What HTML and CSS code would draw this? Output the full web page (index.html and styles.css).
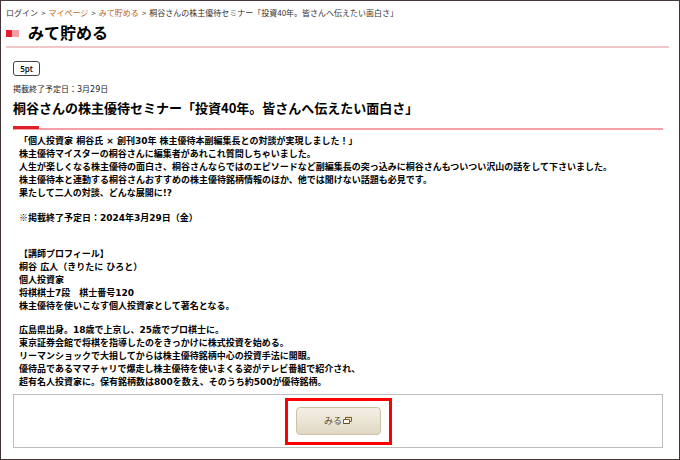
FILE: index.html
```html
<!DOCTYPE html>
<html lang="ja">
<head>
<meta charset="utf-8">
<meta name="viewport" content="width=device-width, initial-scale=1">
<title>みて貯める</title>
<link rel="stylesheet" href="styles.css">
</head>
<body>
<div class="page">
  <nav class="breadcrumb" aria-label="breadcrumb">
    <span>ログイン</span>
    <span>&gt;</span>
    <a href="#">マイページ</a>
    <span>&gt;</span>
    <a href="#">みて貯める</a>
    <span>&gt;</span>
    <span>桐谷さんの株主優待セミナー「投資40年。皆さんへ伝えたい面白さ」</span>
  </nav>
  <h1 class="page-title">みて貯める</h1>
  <main class="content">
    <span class="point">5pt</span>
    <p class="date">掲載終了予定日：3月29日</p>
    <h2 class="title">桐谷さんの株主優待セミナー「投資40年。皆さんへ伝えたい面白さ」</h2>
    <div class="text">
      <p>「個人投資家 桐谷氏 × 創刊30年 株主優待本副編集長との対談が実現しました！」<br>
      株主優待マイスターの桐谷さんに編集者があれこれ質問しちゃいました。<br>
      人生が楽しくなる株主優待の面白さ、桐谷さんならではのエピソードなど副編集長の突っ込みに桐谷さんもついつい沢山の話をして下さいました。<br>
      株主優待本と連動する桐谷さんおすすめの株主優待銘柄情報のほか、他では聞けない話題も必見です。<br>
      果たして二人の対談、どんな展開に!?</p>
      <p><span class="mark">※</span>掲載終了予定日：2024年3月29日（金）</p>
      <p class="profile">【講師プロフィール】<br>
      桐谷 広人（きりたに ひろと）<br>
      個人投資家<br>
      将棋棋士7段　棋士番号120<br>
      株主優待を使いこなす個人投資家として著名となる。</p>
      <p>広島県出身。18歳で上京し、25歳でプロ棋士に。<br>
      東京証券会館で将棋を指導したのをきっかけに株式投資を始める。<br>
      リーマンショックで大損してからは株主優待銘柄中心の投資手法に開眼。<br>
      優待品であるママチャリで爆走し株主優待を使いまくる姿がテレビ番組で紹介され、<br>
      超有名人投資家に。保有銘柄数は800を数え、そのうち約500が優待銘柄。</p>
    </div>
    <div class="action">
      <div class="highlight">
        <button class="view" type="button">みる<svg class="window-icon" viewBox="0 0 9 9" aria-hidden="true"><path class="back" d="M2.5 5V1.5h6v4H7"/><path class="back" d="M2.5 1.4h6"/><path class="front" d="M.5 3.5h6v4h-6z"/><path class="base" d="M.5 7.5h6"/></svg></button>
      </div>
    </div>
  </main>
</div>
</body>
</html>
```
FILE: styles.css
```css
* {
  box-sizing: border-box;
}

body {
  margin: 0;
  color: #000;
  font-family: "DejaVu Sans", "Noto Sans CJK JP", sans-serif;
}

h1, h2, p {
  margin: 0;
}

.page {
  min-height: 100vh;
  padding: 6px 10px 0 5px;
  border: 1px solid #433638;
  background: #fff;
}

.breadcrumb {
  display: flex;
  gap: 3px;
  font-family: "Noto Sans CJK JP", sans-serif;
  font-size: 8px;
  line-height: 12px;
  color: #333;
  white-space: nowrap;
}

.breadcrumb a {
  color: #b8651b;
  text-decoration: none;
}

.page-title {
  display: flex;
  align-items: center;
  gap: 9px;
  height: 29px;
  padding-top: 2px;
  border-bottom: 2px solid #f1c8c9;
  font-size: 16px;
  line-height: 24px;
}

.page-title::before {
  content: "";
  width: 13px;
  height: 7px;
  background: linear-gradient(90deg, #e51f2f 50%, #f4a0a8 50%);
}

.content {
  padding: 13px 6px 0 7px;
}

.point {
  display: block;
  width: 27px;
  border: 1px solid #444;
  border-radius: 3px;
  font-family: "Open Sans", sans-serif;
  font-size: 8px;
  font-weight: 600;
  line-height: 13px;
  text-align: center;
}

.date {
  margin-top: 7px;
  font-size: 8px;
  line-height: 13px;
  color: #222;
}

.title {
  position: relative;
  height: 34px;
  border-bottom: 2px solid #f5a0a6;
  font-family: "Noto Sans CJK JP", sans-serif;
  font-size: 13px;
  line-height: 24px;
}

.title::after {
  content: "";
  position: absolute;
  left: 0;
  bottom: -1px;
  width: 26px;
  height: 3px;
  background: #e01f29;
}

.text {
  display: grid;
  gap: 11px;
  padding: 5px 6px;
  font-size: 9px;
  font-weight: 700;
  line-height: 13px;
}

.profile {
  margin-top: 12px;
}

.mark {
  font-family: "Noto Sans CJK JP", sans-serif;
}

.action {
  display: flex;
  justify-content: center;
  padding: 3px 0 2px;
  border: 1px solid #bdbdbd;
}

.highlight {
  padding: 6px 8px 7px;
  border: 3px solid #fe0000;
}

.view {
  display: flex;
  align-items: center;
  justify-content: center;
  gap: 1px;
  width: 85px;
  height: 28px;
  padding: 0 0 2px;
  border: 1px solid #cdc2a5;
  border-radius: 4px;
  background: linear-gradient(#f4f0e6, #e0d8c4);
  color: #5c5034;
  font-family: "Noto Sans CJK JP", sans-serif;
  font-size: 9px;
}

.window-icon {
  width: 9px;
  height: 9px;
}

.window-icon path {
  fill: none;
  stroke: #80601c;
}

.window-icon .front {
  fill: #fffaf0;
}

.window-icon .base {
  stroke: #6b4c10;
}
```
